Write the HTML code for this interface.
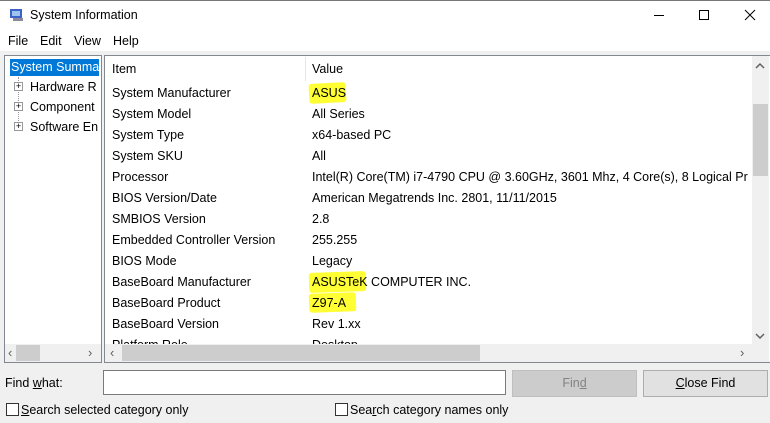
<!DOCTYPE html>
<html><head><style>
*{margin:0;padding:0;box-sizing:border-box}
body{width:770px;height:423px;background:#f0f0f0;font-family:"Liberation Sans",sans-serif;font-size:12.5px;color:#000;position:relative;overflow:hidden}
.abs{position:absolute;white-space:nowrap}
.title{left:0;top:0;width:770px;height:31px;background:#fff;border-top:1px solid #777}
.menu{left:0;top:31px;width:770px;height:20px;background:#fff}
.panel{background:#fff;border:1px solid #828790}
.row{left:112px}
.val{left:312px}
.hl{position:absolute;background:#ffff33;border-radius:3px}
.sb{background:#f0f0f0}
.btn{border:1px solid #adadad;text-align:center;line-height:24px}
.cb{width:13px;height:13px;border:1px solid #333;background:#fff;display:inline-block;vertical-align:-2px;margin-right:2px}
.ar{color:#606060;font-size:13px}
</style></head><body>
<div class="abs title"></div>
<div class="abs menu"></div>
<svg class="abs" style="left:9px;top:7px" width="16" height="16"><rect x="1" y="2" width="12" height="9" fill="#3a62c8"/><rect x="3" y="4" width="8" height="5" fill="#9fc3ef"/><rect x="4" y="11" width="10" height="3" fill="#8a8a9a"/></svg>
<div class="abs" style="left:30px;top:8px;font-size:12.5px">System Information</div>
<div class="abs" style="left:654px;top:15px;width:10px;height:1px;background:#000"></div>
<div class="abs" style="left:699px;top:10px;width:10px;height:10px;border:1px solid #000"></div>
<svg class="abs" style="left:744px;top:9px" width="12" height="12"><path d="M1 1L11 11M11 1L1 11" stroke="#000" stroke-width="1"/></svg>
<div class="abs" style="left:8px;top:34px">File</div>
<div class="abs" style="left:40px;top:34px">Edit</div>
<div class="abs" style="left:74px;top:34px">View</div>
<div class="abs" style="left:113px;top:34px">Help</div>

<div class="abs panel" style="left:4px;top:55px;width:98px;height:308px"></div>
<div class="abs" style="left:10px;top:59px;width:89px;height:17px;background:#0078d7;color:#fff;padding-left:1px;line-height:17px;overflow:hidden">System Summa</div>
<div class="abs" style="left:18px;top:77px;width:1px;height:50px;border-left:1px dotted #999"></div>
<div class="abs" style="left:14px;top:82px;width:9px;height:9px;border:1px solid #999;background:#fff;font-size:9px;line-height:7px;text-align:center">+</div>
<div class="abs" style="left:14px;top:102px;width:9px;height:9px;border:1px solid #999;background:#fff;font-size:9px;line-height:7px;text-align:center">+</div>
<div class="abs" style="left:14px;top:122px;width:9px;height:9px;border:1px solid #999;background:#fff;font-size:9px;line-height:7px;text-align:center">+</div>
<div class="abs" style="left:30px;top:80px;width:68px;overflow:hidden">Hardware R</div>
<div class="abs" style="left:30px;top:100px;width:68px;overflow:hidden">Component</div>
<div class="abs" style="left:30px;top:120px;width:68px;overflow:hidden">Software En</div>
<div class="abs sb" style="left:5px;top:344px;width:96px;height:18px"></div>
<div class="abs" style="left:16px;top:345px;width:24px;height:16px;background:#cdcdcd"></div>
<div class="abs ar" style="left:8px;top:345px">‹</div>
<div class="abs ar" style="left:88px;top:345px">›</div>

<div class="abs panel" style="left:104px;top:55px;width:666px;height:308px;border-right:none"></div>
<div class="abs" style="left:305px;top:57px;width:1px;height:24px;background:#e5e5e5"></div>
<div class="hl" style="left:309px;top:83px;width:37px;height:20px;transform:rotate(-3deg)"></div>
<div class="hl" style="left:309px;top:272px;width:57px;height:20px;transform:rotate(-2deg)"></div>
<div class="hl" style="left:309px;top:293px;width:47px;height:19px;transform:rotate(-2deg)"></div>
<div class="abs row" style="top:62px">Item</div><div class="abs val" style="top:62px">Value</div>
<div class="abs row" style="top:86px">System Manufacturer</div><div class="abs val" style="top:86px">ASUS</div>
<div class="abs row" style="top:107px">System Model</div><div class="abs val" style="top:107px">All Series</div>
<div class="abs row" style="top:128px">System Type</div><div class="abs val" style="top:128px">x64-based PC</div>
<div class="abs row" style="top:149px">System SKU</div><div class="abs val" style="top:149px">All</div>
<div class="abs row" style="top:170px">Processor</div><div class="abs val" style="top:170px;width:440px;overflow:hidden">Intel(R) Core(TM) i7-4790 CPU @ 3.60GHz, 3601 Mhz, 4 Core(s), 8 Logical Pr</div>
<div class="abs row" style="top:191px">BIOS Version/Date</div><div class="abs val" style="top:191px">American Megatrends Inc. 2801, 11/11/2015</div>
<div class="abs row" style="top:212px">SMBIOS Version</div><div class="abs val" style="top:212px">2.8</div>
<div class="abs row" style="top:233px">Embedded Controller Version</div><div class="abs val" style="top:233px">255.255</div>
<div class="abs row" style="top:254px">BIOS Mode</div><div class="abs val" style="top:254px">Legacy</div>
<div class="abs row" style="top:275px">BaseBoard Manufacturer</div><div class="abs val" style="top:275px">ASUSTeK COMPUTER INC.</div>
<div class="abs row" style="top:296px">BaseBoard Product</div><div class="abs val" style="top:296px">Z97-A</div>
<div class="abs row" style="top:317px">BaseBoard Version</div><div class="abs val" style="top:317px">Rev 1.xx</div>
<div class="abs row" style="top:338px;height:6px;overflow:hidden">Platform Role</div><div class="abs val" style="top:338px;height:6px;overflow:hidden">Desktop</div>
<div class="abs sb" style="left:752px;top:56px;width:17px;height:288px"></div>
<div class="abs" style="left:753px;top:104px;width:15px;height:72px;background:#cdcdcd"></div>
<svg class="abs" style="left:755px;top:62px" width="10" height="8"><path d="M1 6L5 2L9 6" stroke="#606060" stroke-width="1.5" fill="none"/></svg>
<svg class="abs" style="left:755px;top:332px" width="10" height="8"><path d="M1 2L5 6L9 2" stroke="#606060" stroke-width="1.5" fill="none"/></svg>
<div class="abs sb" style="left:105px;top:344px;width:664px;height:18px"></div>
<div class="abs" style="left:122px;top:345px;width:358px;height:16px;background:#cdcdcd"></div>
<div class="abs ar" style="left:110px;top:345px">‹</div>
<div class="abs ar" style="left:740px;top:345px">›</div>

<div class="abs" style="left:5px;top:376px">Find <u>w</u>hat:</div>
<div class="abs" style="left:103px;top:370px;width:403px;height:25px;background:#fff;border:1px solid #7a7a7a"></div>
<div class="abs btn" style="left:512px;top:370px;width:125px;height:27px;background:#ccc;color:#838383;border-color:#bfbfbf">Fin<u>d</u></div>
<div class="abs btn" style="left:643px;top:370px;width:125px;height:27px;background:#e1e1e1"><u>C</u>lose Find</div>
<div class="abs" style="left:6px;top:403px"><span class="cb"></span><u>S</u>earch selected category only</div>
<div class="abs" style="left:335px;top:403px"><span class="cb"></span>Sea<u>r</u>ch category names only</div>
</body></html>
